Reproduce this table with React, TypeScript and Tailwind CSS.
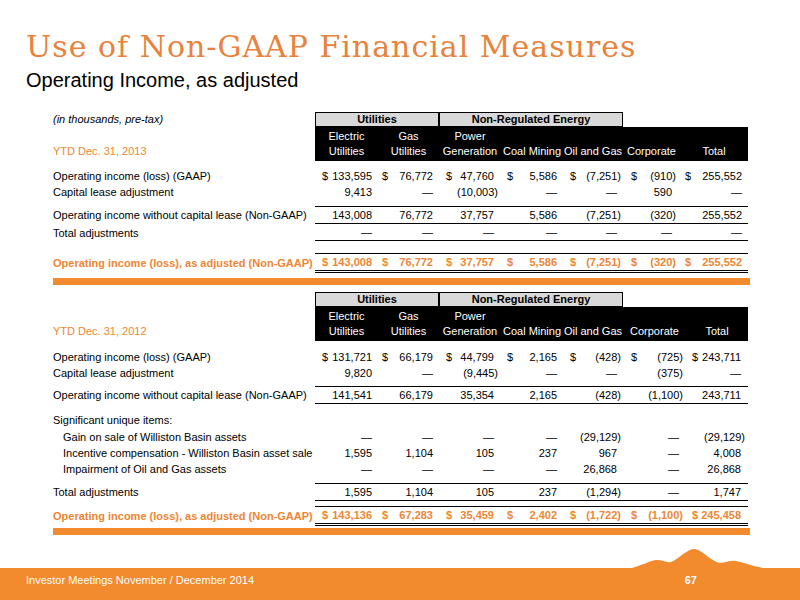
import React from "react";

type Col = { pl: string; pr: string };

const cols1: Col[] = [
  { pl: "pl-[7px]", pr: "pr-[2px]" },
  { pl: "pl-[4px]", pr: "pr-[2px]" },
  { pl: "pl-[7px]", pr: "pr-[3px]" },
  { pl: "pl-[6px]", pr: "pr-[2px]" },
  { pl: "pl-[7px]", pr: "pr-[2px]" },
  { pl: "pl-[8px]", pr: "pr-[4px]" },
  { pl: "pl-[5px]", pr: "pr-[2px]" },
];

const cols2: Col[] = [
  { pl: "pl-[7px]", pr: "pr-[2px]" },
  { pl: "pl-[4px]", pr: "pr-[2px]" },
  { pl: "pl-[7px]", pr: "pr-[3px]" },
  { pl: "pl-[6px]", pr: "pr-[2px]" },
  { pl: "pl-[7px]", pr: "pr-[2px]" },
  { pl: "pl-[8px]", pr: "pr-[3px]" },
  { pl: "pl-[6px]", pr: "pr-[3px]" },
];

const GRID1 = "grid grid-cols-[262px_63px_61px_62px_62px_60px_57px_68px]";
const GRID2 = "grid grid-cols-[262px_63px_61px_62px_62px_60px_63px_62px]";

const headers: [string, string][] = [
  ["Electric", "Utilities"],
  ["Gas", "Utilities"],
  ["Power", "Generation"],
  ["", "Coal Mining"],
  ["", "Oil and Gas"],
  ["", "Corporate"],
  ["", "Total"],
];

function Header({ grid, ytd }: { grid: string; ytd: string }) {
  return (
    <div className={grid}>
      <div className="h-[15px] flex items-center italic leading-[13px]">
        {ytd.endsWith("2013") ? "(in thousands, pre-tax)" : ""}
      </div>
      <div className="col-span-2 h-[15px] bg-[#d9d9d9] border border-black flex items-center justify-center font-bold leading-[13px]">
        Utilities
      </div>
      <div className="col-span-3 h-[15px] bg-[#d9d9d9] border border-black flex items-center justify-center font-bold leading-[13px]">
        Non-Regulated Energy
      </div>
      <div className="col-span-2 h-[15px]" />
      <div className="h-[34px] flex items-end pb-[2px] leading-[15px] text-[#ee8633]">{ytd}</div>
      {headers.map((h, i) => (
        <div
          key={i}
          className="h-[34px] bg-black text-white flex flex-col items-center pt-[2px] leading-[15px] whitespace-nowrap"
        >
          <span>{h[0] || "\u00a0"}</span>
          <span>{h[1]}</span>
        </div>
      ))}
    </div>
  );
}

type RowProps = {
  grid: string;
  cols: Col[];
  label: string;
  values?: string[];
  dollar?: boolean;
  orange?: boolean;
  indent?: boolean;
  rowCls: string;
  cellCls?: string;
};

function Row({ grid, cols, label, values, dollar, orange, indent, rowCls, cellCls = "" }: RowProps) {
  return (
    <div className={`${grid} ${rowCls} leading-[16px] ${orange ? "text-[#ee8633] font-bold" : ""}`}>
      <div className={`flex items-center whitespace-nowrap ${indent ? "pl-[10px]" : ""}`}>{label}</div>
      {(values ?? ["", "", "", "", "", "", ""]).map((v, i) => {
        const paren = v.startsWith("(");
        return (
          <div
            key={i}
            className={`flex items-center justify-between whitespace-nowrap border-black ${cols[i].pl} ${cols[i].pr} ${cellCls}`}
          >
            <span>{dollar ? "$" : ""}</span>
            <span className={paren ? "" : "pr-[4px]"}>{v}</span>
          </div>
        );
      })}
    </div>
  );
}

const D = "\u2014";

export default function App() {
  return (
    <div className="w-[800px] h-[600px] bg-white flex flex-col relative overflow-hidden text-[11px] text-black font-['Liberation_Sans',Arial,sans-serif]">
      <div className="pl-[26px] pt-[30px]">
        <h1 className="text-[30px] leading-[34px] tracking-[1px] text-[#e8823c] font-['DejaVu_Serif',serif] whitespace-nowrap">
          Use of Non-GAAP Financial Measures
        </h1>
        <div className="mt-[4px] text-[20px] leading-[24px] whitespace-nowrap">Operating Income, as adjusted</div>
      </div>

      <div className="ml-[53px] w-[697px] mt-[20px]">
        {/* Table 2013 */}
        <Header grid={GRID1} ytd="YTD Dec. 31, 2013" />
        <Row
          grid={GRID1}
          cols={cols1}
          rowCls="mt-[7px] h-[16px]"
          label="Operating income (loss) (GAAP)"
          dollar
          values={["133,595", "76,772", "47,760", "5,586", "(7,251)", "(910)", "255,552"]}
        />
        <Row
          grid={GRID1}
          cols={cols1}
          rowCls="h-[16px]"
          label="Capital lease adjustment"
          values={["9,413", D, "(10,003)", D, D, "590", D]}
        />
        <Row
          grid={GRID1}
          cols={cols1}
          rowCls="mt-[6px] h-[18px]"
          cellCls="border-t border-b"
          label="Operating income without capital lease (Non-GAAP)"
          values={["143,008", "76,772", "37,757", "5,586", "(7,251)", "(320)", "255,552"]}
        />
        <Row
          grid={GRID1}
          cols={cols1}
          rowCls="h-[16px]"
          cellCls="border-b"
          label="Total adjustments"
          values={[D, D, D, D, D, D, D]}
        />
        <Row
          grid={GRID1}
          cols={cols1}
          rowCls="mt-[13px] h-[19px]"
          cellCls="border-t border-b-[3px] border-double"
          orange
          dollar
          label="Operating income (loss), as adjusted (Non-GAAP)"
          values={["143,008", "76,772", "37,757", "5,586", "(7,251)", "(320)", "255,552"]}
        />
        <div className="mt-[6px] h-[7px] bg-[#f28a2e]" />

        {/* Table 2012 */}
        <div className="mt-[7px]">
          <Header grid={GRID2} ytd="YTD Dec. 31, 2012" />
        </div>
        <Row
          grid={GRID2}
          cols={cols2}
          rowCls="mt-[8px] h-[16px]"
          label="Operating income (loss) (GAAP)"
          dollar
          values={["131,721", "66,179", "44,799", "2,165", "(428)", "(725)", "243,711"]}
        />
        <Row
          grid={GRID2}
          cols={cols2}
          rowCls="h-[16px]"
          label="Capital lease adjustment"
          values={["9,820", D, "(9,445)", D, D, "(375)", D]}
        />
        <Row
          grid={GRID2}
          cols={cols2}
          rowCls="mt-[5px] h-[18px]"
          cellCls="border-t border-b"
          label="Operating income without capital lease (Non-GAAP)"
          values={["141,541", "66,179", "35,354", "2,165", "(428)", "(1,100)", "243,711"]}
        />
        <Row grid={GRID2} cols={cols2} rowCls="mt-[8px] h-[16px]" label="Significant unique items:" />
        <Row
          grid={GRID2}
          cols={cols2}
          rowCls="h-[17px]"
          indent
          label="Gain on sale of Williston Basin assets"
          values={[D, D, D, D, "(29,129)", D, "(29,129)"]}
        />
        <Row
          grid={GRID2}
          cols={cols2}
          rowCls="h-[16px]"
          indent
          label="Incentive compensation - Williston Basin asset sale"
          values={["1,595", "1,104", "105", "237", "967", D, "4,008"]}
        />
        <Row
          grid={GRID2}
          cols={cols2}
          rowCls="h-[16px]"
          indent
          label="Impairment of Oil and Gas assets"
          values={[D, D, D, D, "26,868", D, "26,868"]}
        />
        <Row
          grid={GRID2}
          cols={cols2}
          rowCls="mt-[6px] h-[18px]"
          cellCls="border-t border-b"
          label="Total adjustments"
          values={["1,595", "1,104", "105", "237", "(1,294)", D, "1,747"]}
        />
        <Row
          grid={GRID2}
          cols={cols2}
          rowCls="mt-[5px] h-[19px]"
          cellCls="border-t border-b-[3px] border-double"
          orange
          dollar
          label="Operating income (loss), as adjusted (Non-GAAP)"
          values={["143,136", "67,283", "35,459", "2,402", "(1,722)", "(1,100)", "245,458"]}
        />
        <div className="mt-[3px] h-[7px] bg-[#f28a2e]" />
      </div>

      <div className="mt-auto h-[32px] bg-[#f28a2e] relative flex items-start pt-[4px] text-white leading-[16px]">
        <svg
          className="absolute left-[620px] bottom-[31px] w-[160px] h-[25px]"
          viewBox="620 544 160 25"
          aria-hidden="true"
        >
          <path
            d="M 628 569 C 642 566 650 560 657 560 C 663 560 666 563 671 562 C 680 558 688 548 695 549 C 702 550 712 562 720 563 C 726 563 730 560 736 561 C 746 563 756 568 772 569 Z"
            fill="#f28a2e"
          />
        </svg>
        <span className="pl-[26px] whitespace-nowrap">Investor Meetings November / December 2014</span>
        <span className="ml-auto mr-[103px] font-bold">67</span>
      </div>
    </div>
  );
}
